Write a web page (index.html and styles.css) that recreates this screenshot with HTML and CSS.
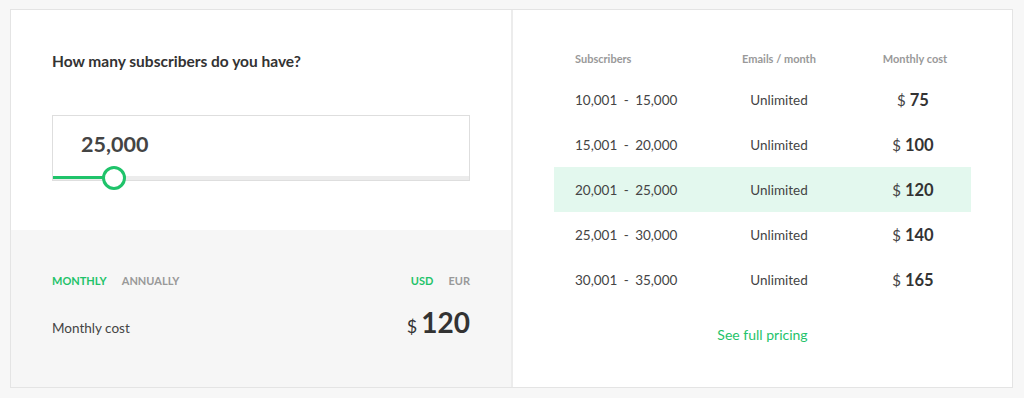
FILE: index.html
```html
<!DOCTYPE html>
<html lang="en">
<head>
    <meta charset="UTF-8">
    <meta name="viewport" content="width=device-width, initial-scale=1.0">
    <title>Pricing calculator</title>
    <link rel="stylesheet" href="styles.css">
</head>
<body>
    <div class="calculator">
        <div class="calc-left">
            <div class="calc-input">
                <h2 class="question">How many subscribers do you have?</h2>
                <div class="slider-box">
                    <div class="slider-value">25,000</div>
                    <div class="slider-track">
                        <div class="slider-fill" style="width: 62px;"></div>
                        <div class="slider-thumb" style="left: 62px;"></div>
                    </div>
                </div>
            </div>
            <div class="calc-result">
                <div class="toggles">
                    <div class="toggle">
                        <span class="active">Monthly</span>
                        <span>Annually</span>
                    </div>
                    <div class="toggle">
                        <span class="active">USD</span>
                        <span>EUR</span>
                    </div>
                </div>
                <div class="total">
                    <span class="total-label">Monthly cost</span>
                    <span class="total-price"><span class="currency">$</span>120</span>
                </div>
            </div>
        </div>

        <div class="calc-right">
            <div class="price-table">
                <div class="price-row price-head">
                    <span>Subscribers</span>
                    <span class="center">Emails / month</span>
                    <span class="center">Monthly cost</span>
                </div>
                <div class="price-row">
                    <span class="range">10,001 - 15,000</span>
                    <span class="center">Unlimited</span>
                    <span class="center cost"><span class="currency">$</span>75</span>
                </div>
                <div class="price-row">
                    <span class="range">15,001 - 20,000</span>
                    <span class="center">Unlimited</span>
                    <span class="center cost"><span class="currency">$</span>100</span>
                </div>
                <div class="price-row selected">
                    <span class="range">20,001 - 25,000</span>
                    <span class="center">Unlimited</span>
                    <span class="center cost"><span class="currency">$</span>120</span>
                </div>
                <div class="price-row">
                    <span class="range">25,001 - 30,000</span>
                    <span class="center">Unlimited</span>
                    <span class="center cost"><span class="currency">$</span>140</span>
                </div>
                <div class="price-row">
                    <span class="range">30,001 - 35,000</span>
                    <span class="center">Unlimited</span>
                    <span class="center cost"><span class="currency">$</span>165</span>
                </div>
            </div>
            <a class="full-pricing" href="#">See full pricing</a>
        </div>
    </div>
</body>
</html>
```

FILE: styles.css
```css
body {
    font-family: 'Lato', 'Liberation Sans', sans-serif;
    background-color: #f7f7f7;
    margin: 0;
    padding: 9px 10px;
    color: #444;
}

.calculator {
    display: grid;
    grid-template-columns: 502px 1fr;
    width: 1001px;
    height: 377px;
    background-color: #fff;
    border: 1px solid #e4e4e4;
}

/* Left side */
.calc-left {
    display: flex;
    flex-direction: column;
    border-right: 2px solid #ececec;
}

.calc-input {
    height: 220px;
    padding: 42px 41px 0 41px;
    box-sizing: border-box;
}

.question {
    font-size: 15.5px;
    font-weight: 700;
    color: #333;
    margin: 0 0 45px 0;
    line-height: 18px;
}

.slider-box {
    border: 1px solid #dedede;
    height: 64px;
    position: relative;
}

.slider-value {
    font-size: 21.5px;
    font-weight: 700;
    color: #444;
    padding: 15px 0 0 28px;
}

.slider-track {
    position: absolute;
    left: 0;
    right: 0;
    bottom: 0;
    height: 4px;
    background-color: #ececec;
}

.slider-fill {
    height: 3px;
    background-color: #1fc36a;
}

.slider-thumb {
    position: absolute;
    top: -10px;
    width: 18px;
    height: 18px;
    margin-left: -13px;
    border: 3px solid #1fc36a;
    border-radius: 50%;
    background-color: #fff;
}

.calc-result {
    flex: 1;
    background-color: #f6f6f6;
    padding: 39px 41px 0 41px;
}

.toggles {
    display: flex;
    justify-content: space-between;
}

.toggle span {
    font-size: 11px;
    font-weight: 700;
    text-transform: uppercase;
    color: #999;
    margin-right: 11px;
}

.toggle span:last-child {
    margin-right: 0;
}

.toggle span.active {
    color: #1fc36a;
}

.total {
    display: flex;
    justify-content: space-between;
    align-items: baseline;
    margin-top: 17px;
}

.total-label {
    font-size: 13.5px;
    color: #444;
}

.total-price {
    font-size: 28px;
    font-weight: 700;
    color: #333;
}

.total-price .currency {
    font-size: 18px;
    font-weight: 400;
    margin-right: 4px;
}

/* Right side */
.calc-right {
    padding: 38px 41px 0 41px;
    display: flex;
    flex-direction: column;
}

.price-table {
    display: flex;
    flex-direction: column;
}

.price-row {
    display: grid;
    grid-template-columns: 1fr 112px 112px;
    column-gap: 24px;
    align-items: center;
    height: 45px;
    padding-left: 21px;
    font-size: 13.5px;
    color: #444;
}

.price-row .center {
    text-align: center;
}

.range {
    word-spacing: 3px;
}

.price-head {
    height: 20px;
    margin-bottom: 9px;
    font-size: 11px;
    font-weight: 700;
    color: #999;
}

.price-row.selected {
    background-color: #e3f8ee;
}

.cost {
    font-size: 16.5px;
    font-weight: 700;
    color: #333;
    padding-right: 4px;
}

.cost .currency {
    font-size: 15px;
    font-weight: 400;
    color: #444;
    margin-right: 4px;
}

.full-pricing {
    align-self: center;
    margin-top: 24px;
    font-size: 14px;
    color: #1fc36a;
    text-decoration: none;
}
```
